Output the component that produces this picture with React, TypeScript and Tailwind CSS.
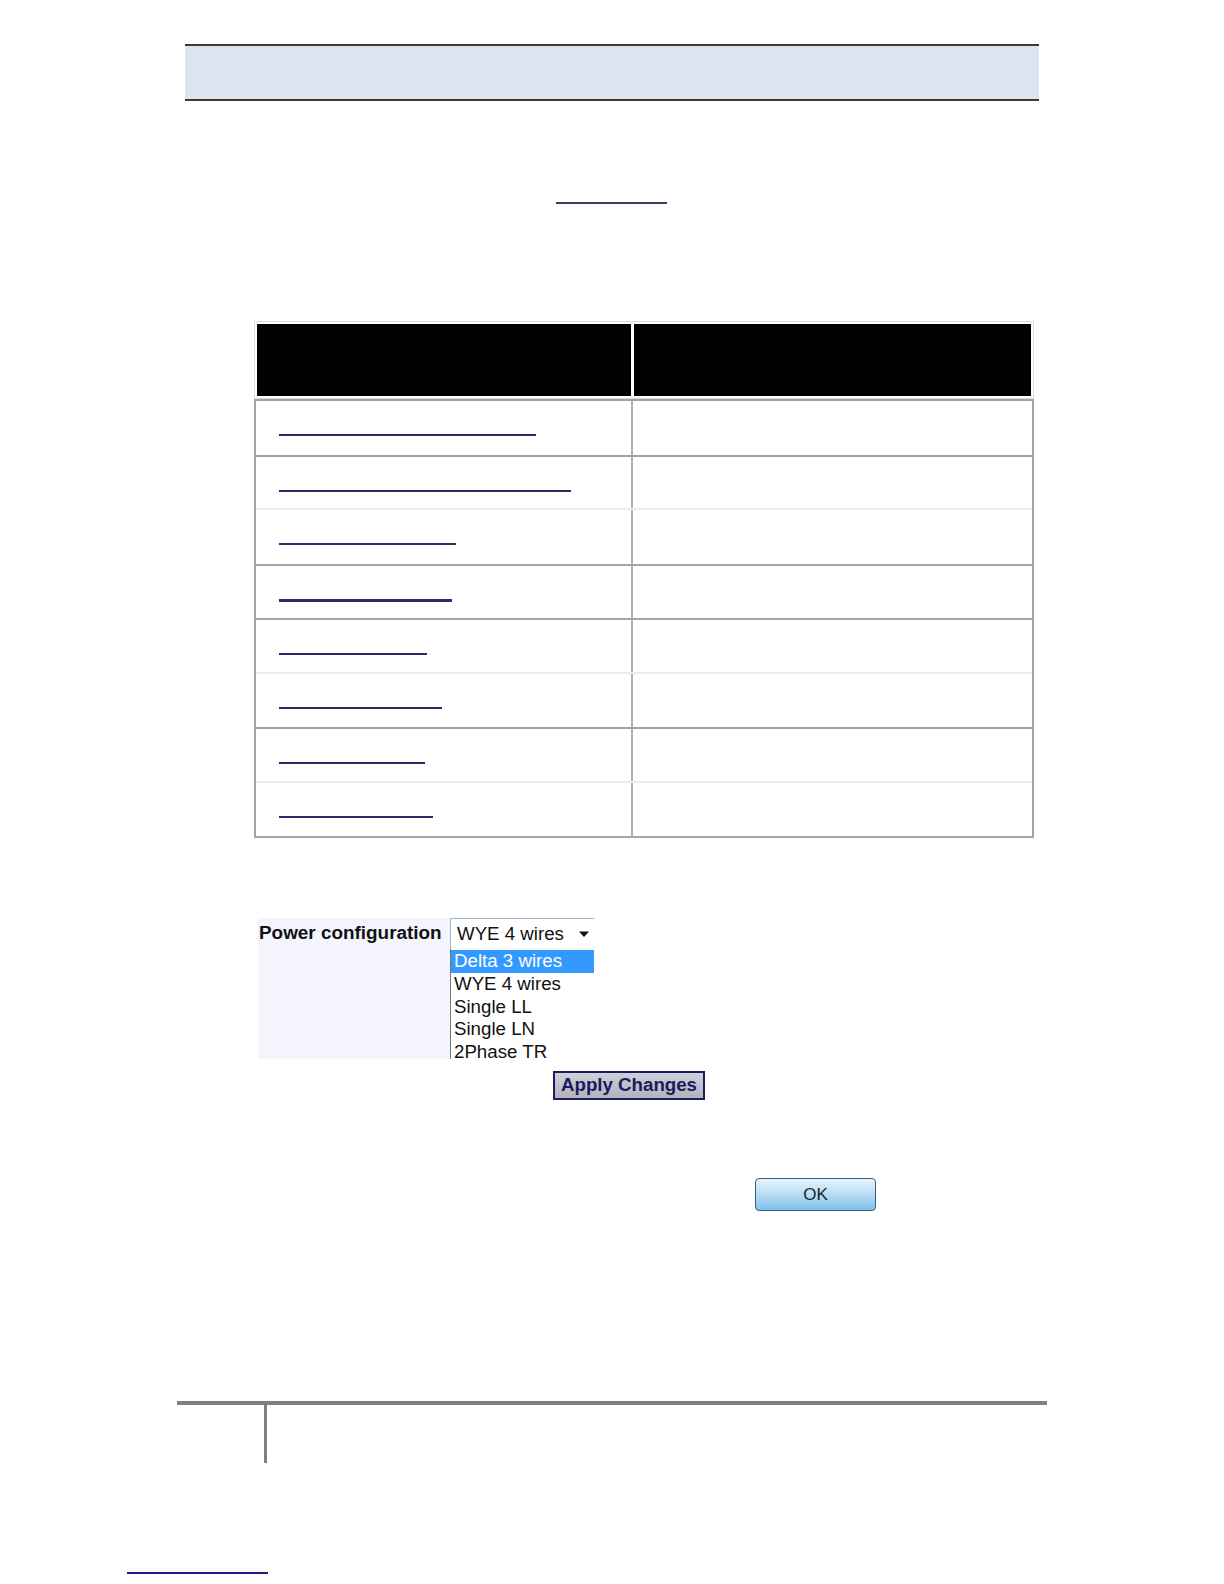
import React from 'react';

const rows = [
  { h: 'h-[56px]', top: 'border-[#a3a3a3]', line: 'w-[257px] h-[2px]' },
  { h: 'h-[53px]', top: 'border-[#a3a3a3]', line: 'w-[292px] h-[2px]' },
  { h: 'h-[56px]', top: 'border-[#ececec]', line: 'w-[177px] h-[2px]' },
  { h: 'h-[54px]', top: 'border-[#a3a3a3]', line: 'w-[173px] h-[3px]' },
  { h: 'h-[54px]', top: 'border-[#a3a3a3]', line: 'w-[148px] h-[2px]' },
  { h: 'h-[55px]', top: 'border-[#ececec]', line: 'w-[163px] h-[2px]' },
  { h: 'h-[54px]', top: 'border-[#a3a3a3]', line: 'w-[146px] h-[2px]' },
  { h: 'h-[55px]', top: 'border-[#ececec]', line: 'w-[154px] h-[2px]' },
];

const options = ['Delta 3 wires', 'WYE 4 wires', 'Single LL', 'Single LN', '2Phase TR'];

export default function App() {
  return (
    <div className="w-full h-screen bg-white overflow-hidden font-['Liberation_Sans',Arial,sans-serif] flow-root">
      {/* page header band */}
      <div className="mt-[44px] ml-[185px] w-[854px] h-[57px] border-y-2 border-[#3b3b35] bg-[#dce4f0]" />

      {/* link */}
      <div className="mt-[101px] ml-[556px] w-[111px] h-[2px] bg-[#3f3c5f]" />

      {/* table */}
      <div className="mt-[117px] ml-[254px] w-[780px]">
        <div className="flex h-[78px] gap-[3px] border border-[#dcdcdc] p-[2px] bg-white">
          <div className="w-[374px] bg-black" />
          <div className="flex-1 bg-black" />
        </div>
        <div className="border-x-2 border-b-2 border-[#a3a3a3]">
          {rows.map((r, i) => (
            <div key={i} className={`flex ${r.h} border-t-2 ${r.top}`}>
              <div className="w-[377px] border-r-2 border-[#b0b0b0] pl-[23px] pt-[33px]">
                <div className={`${r.line} bg-[#2f2b6b]`} />
              </div>
              <div className="flex-1" />
            </div>
          ))}
        </div>
      </div>

      {/* power configuration form */}
      <div className="mt-[80px] ml-[258px] flex">
        <div className="w-[192px] h-[141px] bg-[#f4f4fd] pl-[1px] pt-[3px]">
          <span className="text-[18.9px] font-bold text-[#111] leading-[24px]">Power configuration</span>
        </div>
        <div className="w-[144px] flex flex-col">
          <div className="h-[31px] bg-white border-l border-t border-[#9fb6d3] flex items-center pl-[6px] pr-[4px]">
            <span className="text-[18.7px] text-[#111] leading-none">WYE 4 wires</span>
            <svg className="ml-auto" width="12" height="8" viewBox="0 0 12 8">
              <path d="M1 1.5h10L6 7z" fill="#111" />
            </svg>
          </div>
          <div className="h-[110px] bg-white border-l border-[#777] pt-[1px]">
            {options.map((o, i) => (
              <div
                key={o}
                className={`h-[22.8px] pl-[3px] text-[18.7px] leading-[22.8px] ${
                  i === 0 ? 'bg-[#3399ff] text-white' : 'text-[#111]'
                }`}
              >
                {o}
              </div>
            ))}
          </div>
        </div>
      </div>

      <button className="mt-[12px] ml-[553px] block w-[152px] h-[29px] border-2 border-[#1d1d5a] bg-gradient-to-b from-[#d0d0da] to-[#b2b2c0] text-[18.7px] font-bold text-[#1a1a5c] leading-none">
        Apply Changes
      </button>

      <button className="mt-[78px] ml-[755px] block w-[121px] h-[33px] rounded-[4px] border border-[#2f5f86] bg-gradient-to-b from-[#e6f3fc] via-[#b8ddf5] to-[#7fc0ea] text-[17px] text-[#1e1e1e] leading-none">
        OK
      </button>

      {/* footer rule */}
      <div className="mt-[190px] ml-[177px] w-[870px] h-[4px] bg-[#808080]" />
      <div className="ml-[264px] w-[3px] h-[58px] bg-[#808080]" />

      <div className="mt-[109px] ml-[127px] w-[141px] h-[2px] bg-[#1a1a8a]" />
    </div>
  );
}
